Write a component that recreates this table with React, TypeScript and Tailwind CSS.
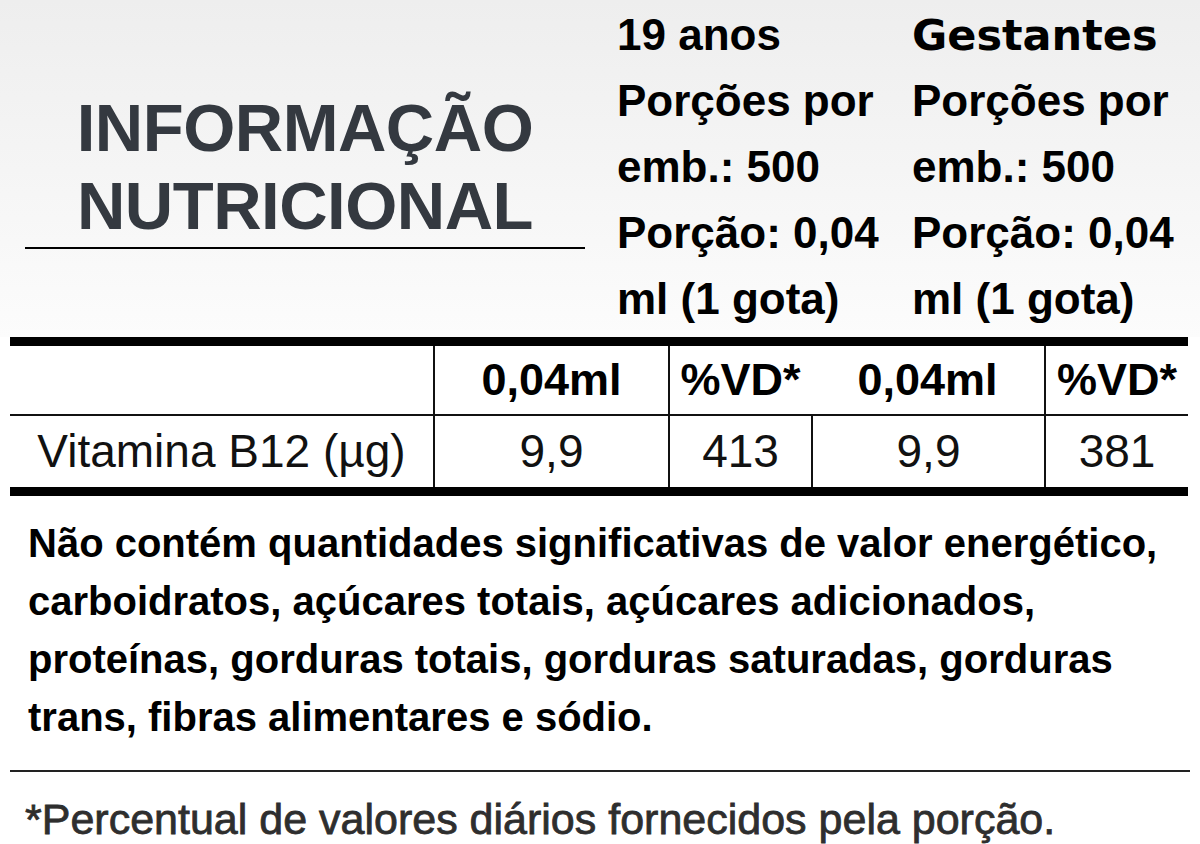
import * as React from 'react';

const rows = [
  { label: 'Vitamina B12 (µg)', a: '9,9', aVd: '413', b: '9,9', bVd: '381' },
];

const servingLines = ['Porções por', 'emb.: 500', 'Porção: 0,04', 'ml (1 gota)'];

export default function App() {
  return (
    <div className="w-[1200px] h-[844px] overflow-hidden bg-white font-['Liberation_Sans',Arial,sans-serif] text-black">
      {/* header block */}
      <div className="flex h-[337px] bg-gradient-to-b from-[#eeeeee] to-[#fcfcfc]">
        <div className="ml-[25px] flex w-[560px] flex-col">
          <h1 className="pt-[89px] text-center text-[67px] font-bold leading-[78px] tracking-[-0.5px] text-[#343940]">
            INFORMAÇÃO
            <br />
            NUTRICIONAL
          </h1>
          <div className="mt-[2px] h-[2px] bg-black" />
        </div>
        <div className="ml-[32px] w-[295px] pt-[2px] text-[44px] font-bold leading-[66px]">
          <div>19 anos</div>
          {servingLines.map((l) => (
            <div key={l}>{l}</div>
          ))}
        </div>
        <div className="pt-[2px] text-[44px] font-bold leading-[66px]">
          <div className="font-['DejaVu_Sans',sans-serif] text-[43px]">Gestantes</div>
          {servingLines.map((l) => (
            <div key={l}>{l}</div>
          ))}
        </div>
      </div>

      {/* table */}
      <div className="mx-[10px] w-[1178px] border-y-[9px] border-black">
        <div className="grid h-[68px] grid-cols-[423px_235px_143px_233px_144px] items-center text-center text-[45px] font-bold">
          <div />
          <div className="flex h-full items-center justify-center border-l-2 border-[#111]">0,04ml</div>
          <div className="flex h-full items-center justify-center border-l-2 border-[#111]">%VD*</div>
          <div className="flex h-full items-center justify-center">0,04ml</div>
          <div className="flex h-full items-center justify-center border-l-2 border-[#111]">%VD*</div>
        </div>
        {rows.map((r) => (
          <div
            key={r.label}
            className="grid h-[73px] grid-cols-[423px_235px_143px_233px_144px] border-t-2 border-[#111] text-center text-[46px] text-[#111]"
          >
            <div className="flex items-center justify-center">{r.label}</div>
            <div className="flex items-center justify-center border-l-2 border-[#111]">{r.a}</div>
            <div className="flex items-center justify-center border-l-2 border-[#111]">{r.aVd}</div>
            <div className="flex items-center justify-center border-l-2 border-[#111]">{r.b}</div>
            <div className="flex items-center justify-center border-l-2 border-[#111]">{r.bVd}</div>
          </div>
        ))}
      </div>

      <p className="ml-[28px] mt-[18px] text-[40px] font-bold leading-[58px]">
        Não contém quantidades significativas de valor energético,
        <br />
        carboidratos, açúcares totais, açúcares adicionados,
        <br />
        proteínas, gorduras totais, gorduras saturadas, gorduras
        <br />
        trans, fibras alimentares e sódio.
      </p>

      <div className="mx-[10px] mt-[24px] h-[2px] w-[1180px] bg-[#222]" />

      <p className="ml-[25px] mt-[22px] text-[43px] leading-[50px] text-[#2e2e2e] [-webkit-text-stroke:0.8px_#2e2e2e]">
        *Percentual de valores diários fornecidos pela porção.
      </p>
    </div>
  );
}
